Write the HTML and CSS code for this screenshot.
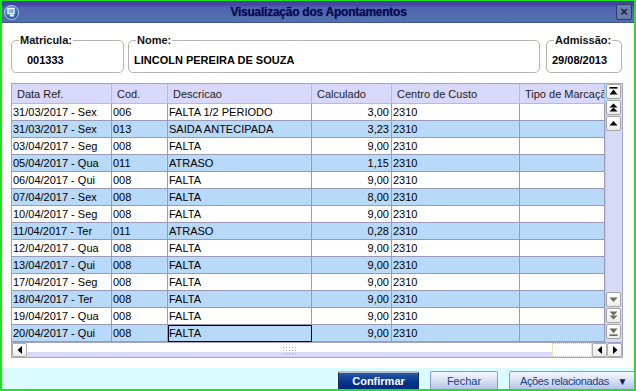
FILE: index.html
```html
<!DOCTYPE html>
<html lang="pt-BR">
<head>
    <meta charset="UTF-8">
    <meta name="viewport" content="width=device-width, initial-scale=1.0">
    <title>Visualização dos Apontamentos</title>

    <!-- estilo -->
    <link rel="stylesheet" href="styles.css">
</head>
<body>
    <div class="window">
        <!-- barra de titulo -->
        <div class="titlebar">
            <svg class="appIcon" width="15" height="15" viewBox="0 0 15 15">
                <defs>
                    <radialGradient id="globe" cx="40%" cy="35%" r="65%">
                        <stop offset="0" stop-color="#9cc8f4"/>
                        <stop offset="0.6" stop-color="#3a78c4"/>
                        <stop offset="1" stop-color="#1c4c94"/>
                    </radialGradient>
                </defs>
                <circle cx="7.5" cy="7.5" r="7" fill="url(#globe)" stroke="#c8d0dc" stroke-width="1"/>
                <rect x="4" y="3.5" width="6" height="5" fill="none" stroke="#fff" stroke-width="1.2"/>
                <rect x="6" y="9.5" width="4" height="2" fill="#fff"/>
            </svg>
            <span class="title">Visualização dos Apontamentos</span>
            <span class="closeBtn">&#215;</span>
        </div>

        <!-- conteudo -->
        <div class="content">
            <div class="fields">
                <fieldset class="field fieldMat">
                    <legend>Matricula:</legend>
                    <div class="value">001333</div>
                </fieldset>
                <fieldset class="field fieldName">
                    <legend>Nome:</legend>
                    <div class="value">LINCOLN PEREIRA DE SOUZA</div>
                </fieldset>
                <fieldset class="field fieldDate">
                    <legend>Admissão:</legend>
                    <div class="value">29/08/2013</div>
                </fieldset>
            </div>

            <div class="grid">
                <div class="gridMain">
                    <div class="gridTable">
                        <table>
                            <colgroup>
                                <col style="width: 100px">
                                <col style="width: 56px">
                                <col style="width: 144px">
                                <col style="width: 80px">
                                <col style="width: 128px">
                                <col style="width: 85px">
                            </colgroup>
                            <thead>
                                <tr>
                                    <th>Data Ref.</th>
                                    <th>Cod.</th>
                                    <th>Descricao</th>
                                    <th>Calculado</th>
                                    <th>Centro de Custo</th>
                                    <th>Tipo de Marcação</th>
                                </tr>
                            </thead>
                            <tbody>
                                <tr><td>31/03/2017 - Sex</td><td>006</td><td>FALTA 1/2 PERIODO</td><td class="num">3,00</td><td>2310</td><td></td></tr>
                                <tr class="alt"><td>31/03/2017 - Sex</td><td>013</td><td>SAIDA ANTECIPADA</td><td class="num">3,23</td><td>2310</td><td></td></tr>
                                <tr><td>03/04/2017 - Seg</td><td>008</td><td>FALTA</td><td class="num">9,00</td><td>2310</td><td></td></tr>
                                <tr class="alt"><td>05/04/2017 - Qua</td><td>011</td><td>ATRASO</td><td class="num">1,15</td><td>2310</td><td></td></tr>
                                <tr><td>06/04/2017 - Qui</td><td>008</td><td>FALTA</td><td class="num">9,00</td><td>2310</td><td></td></tr>
                                <tr class="alt"><td>07/04/2017 - Sex</td><td>008</td><td>FALTA</td><td class="num">8,00</td><td>2310</td><td></td></tr>
                                <tr><td>10/04/2017 - Seg</td><td>008</td><td>FALTA</td><td class="num">9,00</td><td>2310</td><td></td></tr>
                                <tr class="alt"><td>11/04/2017 - Ter</td><td>011</td><td>ATRASO</td><td class="num">0,28</td><td>2310</td><td></td></tr>
                                <tr><td>12/04/2017 - Qua</td><td>008</td><td>FALTA</td><td class="num">9,00</td><td>2310</td><td></td></tr>
                                <tr class="alt"><td>13/04/2017 - Qui</td><td>008</td><td>FALTA</td><td class="num">9,00</td><td>2310</td><td></td></tr>
                                <tr><td>17/04/2017 - Seg</td><td>008</td><td>FALTA</td><td class="num">9,00</td><td>2310</td><td></td></tr>
                                <tr class="alt"><td>18/04/2017 - Ter</td><td>008</td><td>FALTA</td><td class="num">9,00</td><td>2310</td><td></td></tr>
                                <tr><td>19/04/2017 - Qua</td><td>008</td><td>FALTA</td><td class="num">9,00</td><td>2310</td><td></td></tr>
                                <tr class="alt"><td>20/04/2017 - Qui</td><td>008</td><td class="focused">FALTA</td><td class="num">9,00</td><td>2310</td><td></td></tr>
                            </tbody>
                        </table>
                    </div>

                    <!-- barra vertical -->
                    <div class="vscroll">
                        <div class="sbGroup">
                            <span class="sbBtn"><svg width="9" height="9" viewBox="0 0 9 9"><rect x="0.5" y="0" width="8" height="1.6"/><path d="M4.5 2.6 L8.5 7.5 H0.5 Z"/></svg></span>
                            <span class="sbBtn"><svg width="9" height="9" viewBox="0 0 9 9"><path d="M4.5 0.5 L8.5 4.5 H0.5 Z M4.5 4.5 L8.5 8.5 H0.5 Z"/></svg></span>
                            <span class="sbBtn"><svg width="9" height="9" viewBox="0 0 9 9"><path d="M4.5 2 L8.5 6.5 H0.5 Z"/></svg></span>
                        </div>
                        <div class="sbGroup down">
                            <span class="sbBtn"><svg width="9" height="9" viewBox="0 0 9 9"><path d="M0.5 2.5 H8.5 L4.5 7 Z"/></svg></span>
                            <span class="sbBtn"><svg width="9" height="9" viewBox="0 0 9 9"><path d="M0.5 0.5 H8.5 L4.5 4.5 Z M0.5 4.5 H8.5 L4.5 8.5 Z"/></svg></span>
                            <span class="sbBtn"><svg width="9" height="9" viewBox="0 0 9 9"><path d="M0.5 1.5 H8.5 L4.5 6.2 Z"/><rect x="0.5" y="7.4" width="8" height="1.6"/></svg></span>
                        </div>
                    </div>
                </div>

                <!-- barra horizontal -->
                <div class="hscroll">
                    <span class="hsBtn"><svg width="6" height="8" viewBox="0 0 6 8"><path d="M5 0 V8 L0.5 4 Z"/></svg></span>
                    <div class="hsThumb">
                        <svg class="grip" width="14" height="8" viewBox="0 0 14 8">
                            <g fill="#a8a8b0">
                                <rect x="0" y="0" width="1" height="1"/><rect x="3" y="0" width="1" height="1"/><rect x="6" y="0" width="1" height="1"/><rect x="9" y="0" width="1" height="1"/><rect x="12" y="0" width="1" height="1"/>
                                <rect x="0" y="3" width="1" height="1"/><rect x="3" y="3" width="1" height="1"/><rect x="6" y="3" width="1" height="1"/><rect x="9" y="3" width="1" height="1"/><rect x="12" y="3" width="1" height="1"/>
                                <rect x="0" y="6" width="1" height="1"/><rect x="3" y="6" width="1" height="1"/><rect x="6" y="6" width="1" height="1"/><rect x="9" y="6" width="1" height="1"/><rect x="12" y="6" width="1" height="1"/>
                            </g>
                        </svg>
                    </div>
                    <div class="hsRest"></div>
                    <span class="hsBtn"><svg width="6" height="8" viewBox="0 0 6 8"><path d="M5 0 V8 L0.5 4 Z"/></svg></span>
                    <span class="hsBtn"><svg width="6" height="8" viewBox="0 0 6 8"><path d="M1 0 V8 L5.5 4 Z"/></svg></span>
                </div>
            </div>
        </div>

        <!-- botoes -->
        <div class="actions">
            <button class="btn btnPrimary">Confirmar</button>
            <button class="btn btnClose">Fechar</button>
            <button class="btn btnMenu">Ações relacionadas <span class="caret">&#9660;</span></button>
        </div>
    </div>
</body>
</html>
```

FILE: styles.css
```css
* {
    box-sizing: border-box;
}

body {
    margin: 0;
    font-family: "Liberation Sans", Arial, sans-serif;
    font-size: 11px;
    color: #000;
}

.window {
    width: 636px;
    height: 391px;
    border: 2px solid #1ee41e;
    border-top-width: 1px;
    display: flex;
    flex-direction: column;
    background-color: white;
    overflow: hidden;
}

.titlebar {
    height: 22px;
    flex: none;
    display: flex;
    align-items: center;
    padding: 0 2px 0 2px;
    background: linear-gradient(#4444a6 0, #4646a8 4px, #5066ae 7px, #5270b0 100%);
    border-bottom: 1px solid #3e5490;
}

.appIcon {
    flex: none;
    margin-top: 1px;
}

.title {
    flex: 1;
    text-align: center;
    font-size: 12px;
    font-weight: bold;
    letter-spacing: -0.25px;
    color: #080850;
    text-shadow: 0 0 1px #283a8a;
    padding-left: 2px;
}

.closeBtn {
    flex: none;
    width: 16px;
    height: 16px;
    border: 1px solid #2c3c64;
    border-radius: 2px;
    background-color: #6c7cac;
    color: #1a2040;
    font-size: 13px;
    font-weight: bold;
    line-height: 13px;
    text-align: center;
}

.content {
    flex: 1;
    padding: 10px 12px 0 9px;
}

.fields {
    display: flex;
    height: 40px;
}

.field {
    margin: 0;
    height: 40px;
    padding: 0 6px 0 7px;
    border: 1px solid #b4b4ac;
    border-radius: 5px;
}

.field legend {
    padding: 0 1px;
    font-weight: bold;
    line-height: 14px;
    color: #111;
}

.value {
    padding-top: 6px;
    line-height: 14px;
    font-weight: bold;
    white-space: nowrap;
}

.fieldMat {
    width: 113px;
}

.fieldMat .value {
    padding-left: 8px;
}

.fieldName {
    width: 412px;
    margin-left: 4px;
}

.fieldName .value,
.fieldDate .value {
    margin-left: -2px;
}

.fieldDate {
    width: 76px;
    margin-left: 6px;
}

.grid {
    margin-top: 10px;
    width: 612px;
    border: 1px solid #a4a4c0;
}

.gridMain {
    display: flex;
    height: 258px;
}

.gridTable {
    width: 593px;
    overflow: hidden;
}

table {
    border-collapse: separate;
    border-spacing: 0;
    table-layout: fixed;
    width: 593px;
}

th {
    height: 20px;
    padding: 0 0 0 5px;
    text-align: left;
    font-weight: normal;
    color: #1c1c1c;
    background-color: #d8d8fa;
    border-right: 1px solid #8ccaf0;
    border-bottom: 1px solid #8ccaf0;
    white-space: nowrap;
    overflow: hidden;
}

td {
    height: 17px;
    padding: 0 0 0 1px;
    line-height: 16px;
    border-right: 1px solid #9a9ab8;
    border-bottom: 1px solid #9a9ab8;
    white-space: nowrap;
    overflow: hidden;
}

.alt td {
    background-color: #b9d9f9;
}

td.num {
    text-align: right;
    padding-right: 2px;
}

td.focused {
    outline: 1px solid #000;
    outline-offset: -1px;
}

.vscroll {
    width: 17px;
    background-color: #d8d8f8;
    border-left: 1px solid #c8c8e8;
    display: flex;
    flex-direction: column;
    justify-content: space-between;
    padding: 0 1px 3px 0;
}

.sbGroup {
    display: flex;
    flex-direction: column;
    gap: 1px;
}

.sbBtn {
    width: 15px;
    height: 15px;
    display: flex;
    align-items: center;
    justify-content: center;
    border: 1px solid #a6a6a0;
    border-radius: 2px;
    background: linear-gradient(#ffffff, #ececec);
}

.sbBtn svg {
    fill: #000;
}

.down .sbBtn svg {
    fill: #6a6a60;
}

.hscroll {
    height: 15px;
    display: flex;
    border-top: 1px solid #a4a4c0;
    background-color: #d8d8f8;
}

.hsBtn {
    width: 15px;
    height: 14px;
    flex: none;
    display: flex;
    align-items: center;
    justify-content: center;
    border: 1px solid #b0b0a8;
    border-radius: 2px;
    background: linear-gradient(#ffffff, #ececec);
}

.hsBtn svg {
    fill: #000;
}

.hsThumb {
    flex: 1;
    display: flex;
    justify-content: center;
    align-items: center;
    background: linear-gradient(#ffffff 0, #ffffff 9px, #d8d8f8 9px);
}

.grip {
    margin-top: 1px;
}

.hsRest {
    width: 40px;
    flex: none;
    background-color: white;
    border: 1px dotted #d8d0a4;
}

.actions {
    flex: none;
    height: 21px;
    display: flex;
    justify-content: flex-end;
    gap: 11px;
    padding-top: 3px;
    background-color: #dafcfe;
    overflow: hidden;
}

.btn {
    height: 19px;
    padding: 0;
    font-family: "Liberation Sans", Arial, sans-serif;
    font-size: 11px;
    border-radius: 2px;
    cursor: pointer;
}

.btnPrimary {
    width: 81px;
    font-weight: bold;
    color: white;
    border: 1px solid #1c2c58;
    border-top: 2px solid #b8c0cc;
    background: linear-gradient(#2a58a4 0, #0c3e92 40%, #04348a 60%, #002a7c 100%);
}

.btnClose,
.btnMenu {
    color: #1c3c8c;
    border: 1px solid #8898c0;
    background: linear-gradient(#f4f6fc 0, #dce4f4 45%, #b4c4e4 100%);
}

.btnClose {
    width: 68px;
}

.btnMenu {
    width: 131px;
    margin-right: -6px;
    text-align: left;
    padding-left: 10px;
    letter-spacing: -0.4px;
}

.caret {
    margin-left: 6px;
    font-size: 10px;
    color: #102060;
}
```
